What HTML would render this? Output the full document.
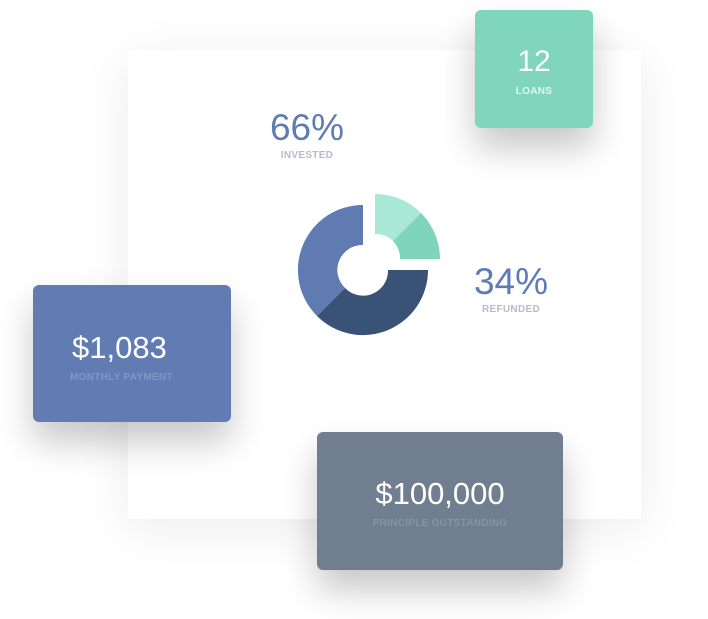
<!DOCTYPE html>
<html><head><meta charset="utf-8"><style>
*{margin:0;padding:0;box-sizing:border-box}
body{width:708px;height:619px;background:#fff;position:relative;overflow:hidden;font-family:"Liberation Sans",sans-serif}
.panel{position:absolute;left:128px;top:50px;width:513px;height:469px;background:#fff;box-shadow:0 10px 50px rgba(0,0,0,0.08)}
.card{position:absolute;border-radius:6px;color:#fff;text-align:center;box-shadow:0 20px 35px rgba(0,0,0,0.22)}
.big{font-weight:300;}
.lbl{font-size:10px;font-weight:bold;letter-spacing:0.3px}
.t{position:absolute;text-align:center;color:#5f7bb6}
.t .n{font-size:37px;line-height:40px}
.t .l{font-size:10px;font-weight:bold;color:#b4bccb;letter-spacing:0.3px;margin-top:2px}
</style></head><body>
<div class="panel"></div>
<div class="t" style="left:247px;top:108px;width:120px"><div class="n">66%</div><div class="l">INVESTED</div></div>
<div class="t" style="left:451px;top:262px;width:120px"><div class="n">34%</div><div class="l">REFUNDED</div></div>
<svg style="position:absolute;left:0;top:0" width="708" height="619">
<path d="M363 205 A65 65 0 0 0 317 316 L345 288 A25 25 0 0 1 363 245 Z" fill="#5f7bb2"/>
<path d="M428 270 A65 65 0 0 1 317 316 L345 288 A25 25 0 0 0 388 270 Z" fill="#3a5275"/>
<path d="M375 194 A65 65 0 0 1 421 213 L393 241 A25 25 0 0 0 375 234 Z" fill="#a8e8d4"/>
<path d="M421 213 A65 65 0 0 1 440 259 L400 259 A25 25 0 0 0 393 241 Z" fill="#80d4ba"/>
</svg>
<div class="card" style="left:475px;top:10px;width:118px;height:118px;background:#80d6bb">
<div class="big" style="font-size:30px;margin-top:36px;line-height:32px">12</div>
<div class="lbl" style="margin-top:8px;color:#e6f7f1">LOANS</div></div>
<div class="card" style="left:33px;top:285px;width:198px;height:137px;background:#607cb3;text-align:left">
<div class="big" style="font-size:31px;margin:46px 0 0 39px;line-height:34px">$1,083</div>
<div class="lbl" style="margin:7px 0 0 37px;color:#7f97c5">MONTHLY PAYMENT</div></div>
<div class="card" style="left:317px;top:432px;width:246px;height:138px;background:#707e90">
<div class="big" style="font-size:31px;margin-top:45px;line-height:34px">$100,000</div>
<div class="lbl" style="margin-top:7px;color:#8794a5">PRINCIPLE OUTSTANDING</div></div>
</body></html>
